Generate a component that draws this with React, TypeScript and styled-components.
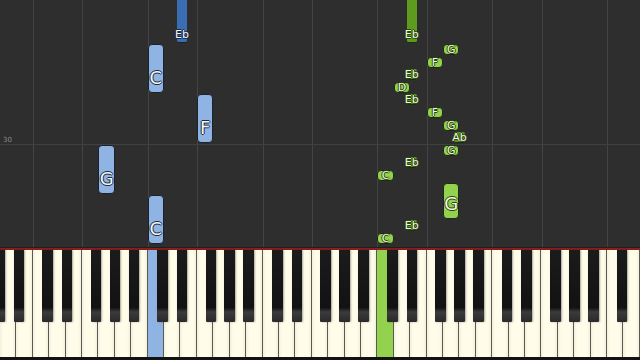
import React from 'react'
import styled, { createGlobalStyle, css } from 'styled-components'

const GlobalStyle = createGlobalStyle`
  html, body {
    margin: 0;
    padding: 0;
    background: #2e2e2e;
  }
`

const WHITE_COUNT = 39
const KEY_W = 640 / WHITE_COUNT
const STEP = 12.6
const ROLL_TOP = 44
const NAMES = ['A', 'B', 'C', 'D', 'E', 'F', 'G']
// offset of a black key from the boundary after the named white key
const BLACK_OFFSET: { [k: string]: number } = { A: 2.5, C: -1.5, D: 1.5, F: -2.5, G: 0 }

type Hand = 'left' | 'right'

interface NoteData {
  hand: Hand
  label: string
  white?: number // white key index
  boundary?: number // black key: boundary index between white keys
  off?: number
  s: number
  len: number
}

const notes: NoteData[] = [
  { hand: 'left', label: 'Eb', boundary: 11, off: 1.5, s: -4, len: 4 },
  { hand: 'left', label: 'C', white: 9, s: 0, len: 4 },
  { hand: 'left', label: 'F', white: 12, s: 4, len: 4 },
  { hand: 'left', label: 'G', white: 6, s: 8, len: 4 },
  { hand: 'left', label: 'C', white: 9, s: 12, len: 4 },

  { hand: 'right', label: 'Eb', boundary: 25, off: 1.5, s: -4, len: 4 },
  { hand: 'right', label: 'G', white: 27, s: 0, len: 1 },
  { hand: 'right', label: 'F', white: 26, s: 1, len: 1 },
  { hand: 'right', label: 'Eb', boundary: 25, off: 1.5, s: 2, len: 1 },
  { hand: 'right', label: 'D', white: 24, s: 3, len: 1 },
  { hand: 'right', label: 'Eb', boundary: 25, off: 1.5, s: 4, len: 1 },
  { hand: 'right', label: 'F', white: 26, s: 5, len: 1 },
  { hand: 'right', label: 'G', white: 27, s: 6, len: 1 },
  { hand: 'right', label: 'Ab', boundary: 28, off: 0, s: 7, len: 1 },
  { hand: 'right', label: 'G', white: 27, s: 8, len: 1 },
  { hand: 'right', label: 'Eb', boundary: 25, off: 1.5, s: 9, len: 1 },
  { hand: 'right', label: 'C', white: 23, s: 10, len: 1 },
  { hand: 'right', label: 'G', white: 27, s: 11, len: 3 },
  { hand: 'right', label: 'Eb', boundary: 25, off: 1.5, s: 14, len: 1 },
  { hand: 'right', label: 'C', white: 23, s: 15, len: 1 },
]

const pressed: { [idx: number]: Hand } = { 9: 'left', 23: 'right' }

const colors = {
  left: { light: '#8fb4e3', dark: '#3a6db4', edge: '#1a222d', ink: '#1c2a3c' },
  right: { light: '#93d24f', dark: '#5c9b1d', edge: '#1f2a10', ink: '#2c4410' },
}

const Page = styled.div`
  width: 640px;
  height: 360px;
  display: flex;
  flex-direction: column;
  overflow: hidden;
  background: #2e2e2e;
  font-family: 'DejaVu Sans', 'Liberation Sans', sans-serif;
`

const Roll = styled.div`
  position: relative;
  flex: 0 0 247px;
  overflow: hidden;
  background: #2e2e2e;
  border-bottom: 1px solid #1e1e1e;
`

const GridLine = styled.div`
  position: absolute;
  top: 0;
  bottom: 0;
  width: 1px;
  background: #444;
`

const MeasureLine = styled.div`
  position: absolute;
  left: 0;
  right: 0;
  height: 1px;
  background: #404040;
`

const MeasureLabel = styled.span`
  position: absolute;
  left: 3px;
  font-size: 7px;
  color: #8a8a8a;
  line-height: 1;
`

const Note = styled.div<{ $hand: Hand; $black: boolean; $tall: boolean }>`
  position: absolute;
  box-sizing: border-box;
  display: flex;
  flex-direction: column;
  align-items: center;
  justify-content: ${(p) => (p.$tall ? 'flex-end' : 'center')};
  padding-bottom: ${(p) => (p.$tall ? (p.$black ? '2px' : '5px') : '0')};
  border-radius: ${(p) => (p.$black ? '2px' : '4px')};
  border: 1px solid ${(p) => colors[p.$hand].edge};
  background: ${(p) => (p.$black ? colors[p.$hand].dark : colors[p.$hand].light)};
  ${(p) =>
    p.$black &&
    css`
      border-width: 0 0 1px 0;
    `}
`

const NoteLabel = styled.span<{ $hand: Hand; $big: boolean }>`
  font-size: ${(p) => (p.$big ? '18px' : '11px')};
  line-height: 1;
  white-space: nowrap;
  color: ${(p) => (p.$hand === 'left' ? '#f4f7fb' : '#eef8e2')};
  text-shadow: ${(p) => {
    const c = colors[p.$hand].ink
    return `-1px 0 ${c}, 1px 0 ${c}, 0 -1px ${c}, 0 1px ${c}`
  }};
`

const Keyboard = styled.div`
  position: relative;
  flex: 1;
  border-top: 2px solid #8a1f1f;
  border-bottom: 3px solid #121212;
  background: #555;
`

const WhiteRow = styled.div`
  display: flex;
  height: 100%;
`

const WhiteKey = styled.div<{ $hand?: Hand }>`
  flex: 1;
  box-sizing: border-box;
  border-right: 1px solid #5a5a52;
  background: ${(p) =>
    p.$hand
      ? colors[p.$hand].light
      : 'linear-gradient(to right, #f2f0dc 0%, #fffde9 20%, #fffde9 80%, #f3f1dd 100%)'};
`

const BlackKey = styled.div`
  position: absolute;
  top: 0;
  width: 10.5px;
  height: 72px;
  border-radius: 0 0 1px 1px;
  background: linear-gradient(to bottom, #1b1b1b 0%, #121212 80%, #3b3b3b 86%, #2a2a2a 100%);
  box-shadow: 1px 0 2px rgba(0, 0, 0, 0.35);
`

function noteBox(n: NoteData) {
  const top = ROLL_TOP + n.s * STEP
  const height = n.len * STEP - 1.5
  if (n.white !== undefined) {
    return { left: n.white * KEY_W, top, width: KEY_W, height }
  }
  const center = (n.boundary as number) * KEY_W + (n.off || 0)
  return { left: center - 5.25, top, width: 10.5, height }
}

export default function App() {
  const gridLines: number[] = []
  for (let i = 0; i < WHITE_COUNT; i++) {
    const name = NAMES[i % 7]
    if (name === 'C' || name === 'F') gridLines.push(i * KEY_W)
  }

  const blackKeys: number[] = []
  for (let i = -1; i < WHITE_COUNT - 1; i++) {
    const name = NAMES[((i % 7) + 7) % 7]
    if (name in BLACK_OFFSET) blackKeys.push((i + 1) * KEY_W + BLACK_OFFSET[name] - 5.25)
  }

  return (
    <Page>
      <GlobalStyle />
      <Roll>
        {gridLines.map((x) => (
          <GridLine key={x} style={{ left: Math.round(x) }} />
        ))}
        <MeasureLine style={{ top: 144 }} />
        <MeasureLabel style={{ top: 137 }}>30</MeasureLabel>
        {notes.map((n, i) => {
          const black = n.white === undefined
          const tall = n.len > 1
          return (
            <Note key={i} $hand={n.hand} $black={black} $tall={tall} style={noteBox(n)}>
              <NoteLabel $hand={n.hand} $big={tall && !black}>
                {n.label}
              </NoteLabel>
            </Note>
          )
        })}
      </Roll>
      <Keyboard>
        <WhiteRow>
          {Array.from({ length: WHITE_COUNT }, (_, i) => (
            <WhiteKey key={i} $hand={pressed[i]} />
          ))}
        </WhiteRow>
        {blackKeys.map((x) => (
          <BlackKey key={x} style={{ left: x }} />
        ))}
      </Keyboard>
    </Page>
  )
}
